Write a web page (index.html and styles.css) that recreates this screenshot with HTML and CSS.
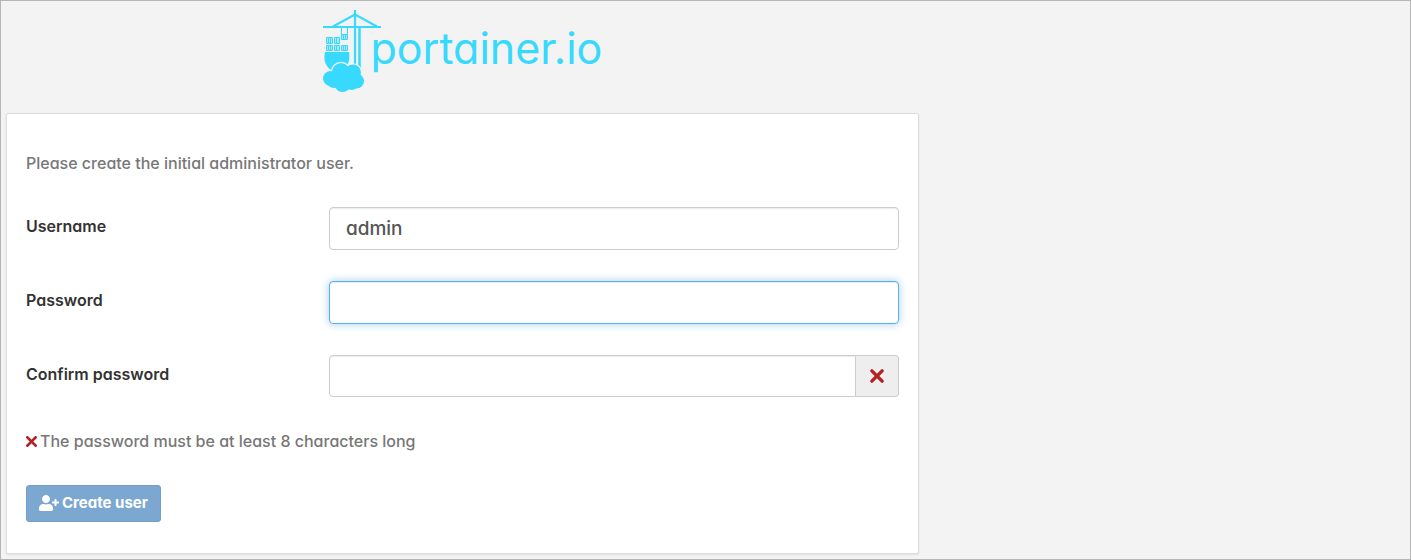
FILE: index.html
```html
<!DOCTYPE html>
<html lang="en">
<head>
<meta charset="utf-8">
<meta name="viewport" content="width=device-width, initial-scale=1">
<title>Portainer</title>
<link rel="stylesheet" href="styles.css">
</head>
<body>
<main class="setup">
  <div class="logo">
    <svg class="logo-mark" viewBox="0 0 60 83" width="60" height="83" aria-hidden="true">
      <defs>
        <g id="cloud">
          <circle cx="8.500" cy="68.500" r="7.500"/>
          <circle cx="19" cy="62" r="9"/>
          <circle cx="31" cy="62.500" r="8"/>
          <circle cx="34.500" cy="71" r="7.500"/>
          <circle cx="20.500" cy="74" r="8"/>
          <circle cx="29.500" cy="72.500" r="7.500"/>
          <circle cx="12" cy="70.500" r="7.500"/>
        </g>
      </defs>
      <g fill="none" stroke="#38d9ff">
        <path d="M1 17H59" stroke-width="2"/>
        <path d="M33 0V57" stroke-width="2.200"/>
        <path d="M37.500 17V58" stroke-width="2.500"/>
        <path d="M11 16.500L33 4.500L55 16.500" stroke-width="2"/>
      </g>
      <g fill="#38d9ff" fill-opacity=".4" stroke="#38d9ff" stroke-width="1">
        <path fill="none" d="M19.500 18V25M25.500 18V25"/>
        <path d="M19.500 24.500h6v5h-6zM21.500 24.500v5M23.500 24.500v5"/>
        <path d="M4.500 27.500h6v6h-6zM6.500 27.500v6M8.500 27.500v6M12.500 27.500h5v6h-5zM14.500 27.500v6"/>
        <path d="M4.500 35.500h6v5h-6zM6.500 35.500v5M8.500 35.500v5M12.500 35.500h5v5h-5zM14.500 35.500v5M19.500 35.500h6v5h-6zM21.500 35.500v5M23.500 35.500v5"/>
      </g>
      <path fill="#38d9ff" d="M3 42H27C28.500 50 26 57 20 60H9C4 57 1 50 3 42Z"/>
      <use href="#cloud" fill="#f3f3f3" stroke="#f3f3f3" stroke-width="2.400"/>
      <use href="#cloud" fill="#38d9ff"/>
    </svg>
    <span class="logo-name">portainer.io</span>
  </div>
  <form class="panel">
    <p class="hint intro">Please create the initial administrator user.</p>
    <div class="field">
      <label for="username">Username</label>
      <input class="control" id="username" type="text" value="admin">
    </div>
    <div class="field">
      <label for="password">Password</label>
      <input class="control is-active" id="password" type="password">
    </div>
    <div class="field">
      <label for="confirm">Confirm password</label>
      <div class="group">
        <input class="control" id="confirm" type="password">
        <span class="addon">
          <svg class="cross" viewBox="0 0 14 14" width="16" height="16" aria-hidden="true"><path d="M2.500 2.500L11.500 11.500M11.500 2.500L2.500 11.500"/></svg>
        </span>
      </div>
    </div>
    <p class="hint rule">
      <svg class="cross" viewBox="1 1 12 12" width="11" height="11" aria-hidden="true"><path d="M2.500 2.500L11.500 11.500M11.500 2.500L2.500 11.500"/></svg>
      <span>The password must be at least 8 characters long</span>
    </p>
    <button class="submit" type="submit" disabled>
      <svg viewBox="0 0 640 512" width="20" height="16" aria-hidden="true"><path fill="currentColor" d="M624 208h-64v-64c0-9-7-16-16-16h-32c-9 0-16 7-16 16v64h-64c-9 0-16 7-16 16v32c0 9 7 16 16 16h64v64c0 9 7 16 16 16h32c9 0 16-7 16-16v-64h64c9 0 16-7 16-16v-32c0-9-7-16-16-16zM224 256c71 0 128-57 128-128S295 0 224 0 96 57 96 128s57 128 128 128zm90 32h-17c-22 10-47 16-73 16s-51-6-73-16h-17C60 288 0 348 0 422v42c0 27 21 48 48 48h352c27 0 48-21 48-48v-42c0-74-60-134-134-134z"/></svg>
      Create user
    </button>
  </form>
</main>
</body>
</html>
```
FILE: styles.css
```css
* {
  box-sizing: border-box;
}

body {
  margin: 0;
  min-height: 100vh;
  padding: 9px 5px 5px;
  border: 1px solid #b5b5b5;
  background: #f3f3f3;
  color: #333;
  font: 500 16px/20px Inter, "Open Sans", sans-serif;
  font-feature-settings: "cv11";
}

.setup {
  width: 65.25%;
}

.logo {
  display: flex;
  justify-content: center;
  margin-bottom: 20px;
}

.logo-mark {
  flex: none;
  margin-right: -12px;
}

.logo-name {
  padding-top: 12px;
  color: #38d9ff;
  font-size: 43px;
  font-weight: 400;
  line-height: 52px;
}

.panel {
  display: flex;
  flex-direction: column;
  align-items: stretch;
  padding: 39px 19px 31px;
  border: 1px solid #ddd;
  border-radius: 2px;
  background: #fff;
  box-shadow: 0 1px 2px rgba(0, 0, 0, 0.08);
}

.hint {
  margin: 0;
  color: #777;
}

.intro {
  margin-bottom: 34px;
}

.field {
  display: grid;
  grid-template-columns: 1fr 2fr;
  gap: 18px;
  margin-bottom: 31px;
}

.field label {
  padding-top: 9px;
  font-weight: 600;
}

.control {
  width: 100%;
  min-width: 0;
  height: 43px;
  padding: 8px 16px;
  border: 1px solid #ccc;
  border-radius: 4px;
  background: #fff;
  box-shadow: inset 0 1px 1px rgba(0, 0, 0, 0.08);
  color: #555;
  font: inherit;
  font-size: 19px;
  outline: none;
}

.is-active {
  border-color: #5aaef0;
  box-shadow: inset 0 1px 1px rgba(0, 0, 0, 0.08), 0 0 8px rgba(102, 175, 233, 0.6);
}

.group {
  display: flex;
}

.group .control {
  height: 42px;
  border-radius: 4px 0 0 4px;
}

.addon {
  display: flex;
  flex: none;
  align-items: center;
  justify-content: center;
  width: 43px;
  border: 1px solid #ccc;
  border-left: 0;
  border-radius: 0 4px 4px 0;
  background: #eee;
}

.cross {
  flex: none;
  fill: none;
  stroke: #b22222;
  stroke-linecap: round;
  stroke-width: 3;
}

.rule {
  display: flex;
  align-items: center;
  gap: 3px;
  margin: 3px 0 34px;
}

.submit {
  display: flex;
  align-items: center;
  align-self: flex-start;
  gap: 3px;
  height: 37px;
  padding: 0 12px 2px;
  border: 1px solid #729fca;
  border-radius: 3px;
  background: #7ba7d1;
  color: #fff;
  font: inherit;
  font-size: 15px;
  font-weight: 700;
}
```
